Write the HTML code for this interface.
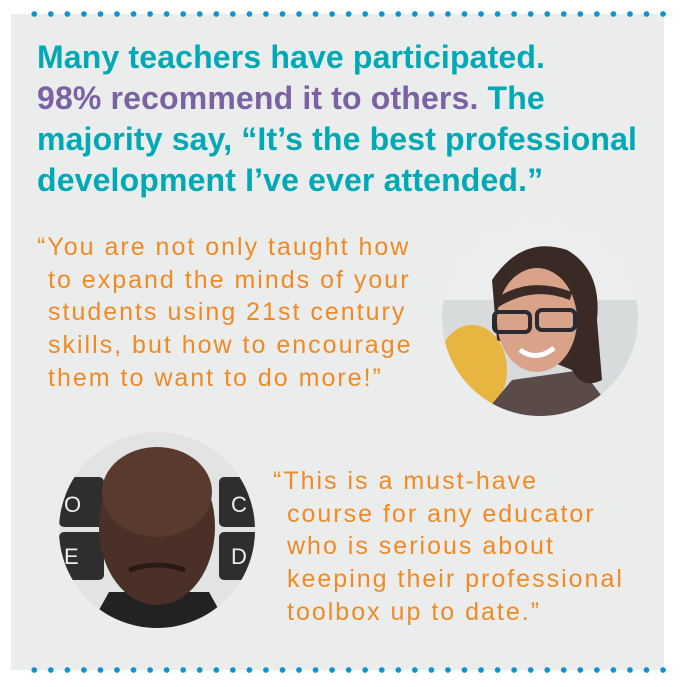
<!DOCTYPE html>
<html><head><meta charset="utf-8"><style>
html,body{margin:0;padding:0;background:#fff;width:680px;height:687px;overflow:hidden;position:relative}
.panel{position:absolute;left:11px;top:14px;width:653px;height:656px;background:#ebeded}
.dots{position:absolute;left:26px;width:640px;height:6px;background-image:radial-gradient(circle,#0a95d2 2.6px,transparent 3px);background-size:16.55px 6px;background-repeat:repeat-x}
h1{position:absolute;left:37px;top:37px;margin:0;font:bold 32px/41px "Liberation Sans",sans-serif;color:#00a9b5;letter-spacing:0.15px;width:640px;white-space:nowrap}
h1 .p{color:#7b62a3}
.q{position:absolute;font:25px/32.7px "Liberation Sans",sans-serif;color:#f08a24;margin:0;letter-spacing:2px;white-space:nowrap}
.q span{display:block;padding-left:11px}
.q span.f{padding-left:0}
svg{position:absolute}
</style></head><body>
<div class="panel"></div>
<div class="dots" style="top:11px"></div>
<div class="dots" style="top:667px"></div>
<h1>Many teachers have participated.<br><span class="p">98% recommend it to others.</span> The<br>majority say, “It’s the best professional<br>development I’ve ever attended.”</h1>
<div class="q" style="left:37px;top:231px"><span class="f">“You are not only taught how</span><span>to expand the minds of your</span><span>students using 21st century</span><span>skills, but how to encourage</span><span>them to want to do more!”</span></div>
<div class="q" style="left:273px;top:465px"><span class="f">“This is a must-have</span><span style="padding-left:14px">course for any educator</span><span style="padding-left:14px">who is serious about</span><span style="padding-left:14px">keeping their professional</span><span style="padding-left:14px">toolbox up to date.”</span></div>
<svg style="left:442px;top:220px" width="196" height="196" viewBox="0 0 196 196">
<defs><clipPath id="c1"><circle cx="98" cy="98" r="98"/></clipPath></defs>
<g clip-path="url(#c1)">
<rect width="196" height="196" fill="#d8dbdc"/>
<rect x="0" y="0" width="196" height="80" fill="#eceeee"/>
<ellipse cx="30" cy="150" rx="35" ry="45" fill="#e8b640"/>
<path d="M40 196 L70 160 L140 150 L175 196Z" fill="#5a4a48"/>
<path d="M50 60 Q80 15 125 30 Q160 50 155 100 L160 160 Q140 170 130 150 L55 120Z" fill="#3a2a25"/>
<ellipse cx="95" cy="100" rx="40" ry="52" fill="#d9a38a"/>
<path d="M52 80 Q85 55 130 72 L128 80 Q90 65 55 88Z" fill="#3a2a25"/>
<rect x="52" y="92" width="36" height="20" rx="5" fill="none" stroke="#2a2a30" stroke-width="4"/>
<rect x="95" y="90" width="38" height="20" rx="5" fill="none" stroke="#2a2a30" stroke-width="4"/>
<path d="M78 130 Q95 142 112 128" stroke="#fff" stroke-width="5" fill="none"/>
</g></svg>
<svg style="left:59px;top:432px" width="196" height="196" viewBox="0 0 196 196">
<defs><clipPath id="c2"><circle cx="98" cy="98" r="98"/></clipPath></defs>
<g clip-path="url(#c2)">
<rect width="196" height="196" fill="#e2e4e3"/>
<rect x="0" y="45" width="45" height="50" rx="5" fill="#2e2e2e"/>
<rect x="0" y="100" width="45" height="48" rx="5" fill="#2e2e2e"/>
<rect x="160" y="45" width="45" height="50" rx="5" fill="#2e2e2e"/>
<rect x="160" y="100" width="45" height="48" rx="5" fill="#2e2e2e"/>
<text x="5" y="80" fill="#eee" font-family="Liberation Sans" font-size="22">O</text>
<text x="5" y="132" fill="#eee" font-family="Liberation Sans" font-size="22">E</text>
<text x="172" y="80" fill="#eee" font-family="Liberation Sans" font-size="22">C</text>
<text x="172" y="132" fill="#eee" font-family="Liberation Sans" font-size="22">D</text>
<path d="M30 196 L50 160 L150 160 L170 196Z" fill="#222"/>
<ellipse cx="98" cy="95" rx="58" ry="78" fill="#4a3026"/>
<ellipse cx="98" cy="60" rx="55" ry="45" fill="#5a3a2e"/>
<path d="M70 138 Q98 128 126 138" stroke="#2a1a15" stroke-width="5" fill="none"/>
</g></svg>
</body></html>
